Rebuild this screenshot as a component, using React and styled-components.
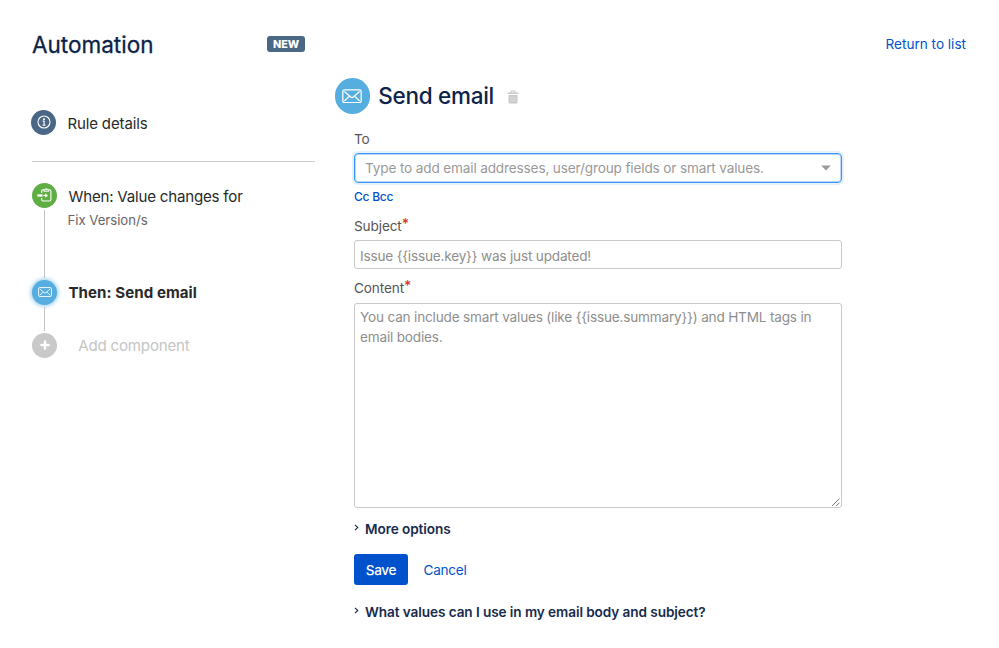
import React from "react";
import styled, { createGlobalStyle } from "styled-components";

const GlobalStyle = createGlobalStyle`
  * { box-sizing: border-box; }
  body {
    margin: 0;
    background: #fff;
    color: #172b4d;
    font-family: Inter, "Liberation Sans", sans-serif;
    font-size: 13.6px;
    -webkit-font-smoothing: antialiased;
  }
  a { color: #0052cc; text-decoration: none; }
`;

const Page = styled.div`
  display: flex;
  align-items: flex-start;
  width: 999px;
  height: 648px;
  padding-right: 33px;
  overflow: hidden;
`;

const Sidebar = styled.aside`
  display: flex;
  flex-direction: column;
  flex: none;
  width: 315px;
  padding-left: 32px;
`;

const SidebarHeader = styled.header`
  display: flex;
  align-items: center;
  justify-content: space-between;
  height: 89px;
  padding-right: 10px;
`;

const PageTitle = styled.h1`
  margin: 0;
  color: #0c2349;
  font-size: 22.5px;
  font-weight: 400;
  line-height: 28px;
  letter-spacing: 0.01px;
  -webkit-text-stroke: 0.3px #0c2349;
`;

const Badge = styled.span`
  width: 38px;
  height: 16px;
  margin-top: -1px;
  border-radius: 3px;
  background: #4a6785;
  color: #fff;
  font-size: 10.8px;
  font-weight: 800;
  line-height: 17px;
  letter-spacing: -0.1px;
  text-align: center;
`;

const RuleDetails = styled.div`
  display: flex;
  align-items: center;
  height: 73px;
  border-bottom: 1px solid #c9cdcc;
`;

const Disc = styled.span`
  display: flex;
  flex: none;
  align-items: center;
  justify-content: center;
  width: ${(p) => p.$size || 25}px;
  height: ${(p) => p.$size || 25}px;
  border-radius: 50%;
  background: ${(p) => p.$color};
  color: #fff;
  box-shadow: ${(p) => (p.$active ? "0 0 4px 1px rgba(82,172,224,.65)" : "none")};
  svg { display: block; }
`;

const RuleDisc = styled(Disc)`
  margin: -6px 0 0 -1px;
`;

const RuleLabel = styled.span`
  margin: -4px 0 0 11.4px;
  color: #292929;
  font-size: 15px;
  letter-spacing: -0.13px;
`;

const Steps = styled.div`
  display: flex;
  flex-direction: column;
  padding-top: 18.4px;
`;

const Step = styled.div`
  display: flex;
  height: ${(p) => p.$height}px;
`;

const Rail = styled.div`
  display: flex;
  flex: none;
  flex-direction: column;
  align-items: center;
  width: 25px;
  padding-top: 3px;
`;

const Connector = styled.span`
  flex: 1;
  width: 1px;
  margin: 2px 0 -1px;
  background: #c4c4c4;
`;

const StepBody = styled.div`
  padding-left: ${(p) => (p.$muted ? 21.3 : 11.5)}px;
  padding-top: 4.4px;
`;

const StepTitle = styled.div`
  color: ${(p) => (p.$muted ? "#c5c5c5" : "#292929")};
  font-size: 15.1px;
  font-weight: ${(p) => (p.$active ? 650 : 400)};
  line-height: 24px;
  letter-spacing: ${(p) => (p.$active ? 0.05 : -0.21)}px;
`;

const StepDetail = styled.div`
  margin-left: -1px;
  color: #666;
  font-size: 13.2px;
  line-height: 22px;
  letter-spacing: -0.03px;
`;

const Main = styled.main`
  display: flex;
  flex-direction: column;
  flex: none;
  width: 508px;
  margin-left: 19px;
  padding-top: 78px;
`;

const SectionHeader = styled.header`
  display: flex;
  align-items: center;
  height: 36px;
  padding-left: 0.5px;
`;

const SectionTitle = styled.h2`
  margin: -1px 0 0 8.5px;
  color: #0c2349;
  font-size: 22.5px;
  font-weight: 500;
  line-height: 28px;
  letter-spacing: -0.28px;
`;

const TrashButton = styled.button`
  display: flex;
  margin: 2px 0 0 12.8px;
  padding: 0;
  border: 0;
  background: none;
  color: #c9c9c9;
`;

const Form = styled.form`
  display: flex;
  flex-direction: column;
  padding: 11px 0 0 20px;
`;

const Label = styled.label`
  height: ${(p) => p.$height}px;
  padding-top: ${(p) => p.$drop || 0}px;
  color: #555;
  font-size: 13.6px;
  line-height: 28px;
  letter-spacing: -0.12px;
`;

const Required = styled.span`
  color: #d9352b;
  font-size: 14px;
  font-weight: 500;
  line-height: 0;
  vertical-align: 2px;
`;

const Combo = styled.div`
  display: flex;
  align-items: center;
  justify-content: space-between;
  height: 30px;
  padding: 0 10px;
  border: 1px solid #3b94f4;
  border-radius: 4px;
  box-shadow: inset 0 0 0 1px rgba(59, 148, 244, 0.35), 0 0 0 2px #e5f2fe;
  color: #999;
  letter-spacing: -0.15px;
`;

const CopyLinks = styled.div`
  height: 28px;
  font-size: 12px;
  font-weight: 500;
  line-height: 28px;
  letter-spacing: -0.26px;
`;

const TextField = styled.div`
  height: 29px;
  padding-left: 5px;
  border: 1px solid #c9c9c9;
  border-radius: 3px;
  color: #8e8e8e;
  line-height: 30px;
  letter-spacing: -0.19px;
`;

const TextArea = styled.div`
  display: flex;
  justify-content: space-between;
  align-items: flex-end;
  height: 205px;
  padding: 3px 0 0 5px;
  border: 1px solid #c9c9c9;
  border-radius: 3px;
  color: #8e8e8e;
`;

const TextAreaHint = styled.div`
  align-self: flex-start;
  width: 464px;
  line-height: 20px;
  letter-spacing: -0.19px;
`;

const Disclosure = styled.div`
  display: flex;
  align-items: center;
  height: 20px;
  margin-top: ${(p) => p.$gap}px;
  color: #172b4d;
  font-weight: 600;
  letter-spacing: -0.085px;
  svg { flex: none; margin: -3px 6px 0 0; }
`;

const Actions = styled.div`
  display: flex;
  align-items: center;
  gap: 15.5px;
  height: 32px;
  margin-top: 15px;
  line-height: 18px;
  letter-spacing: -0.27px;
`;

const SaveButton = styled.button`
  width: 54px;
  height: 31.5px;
  padding: 1px 0 0;
  border: 0;
  border-radius: 3px;
  background: #0052cc;
  color: #fff;
  font: 500 13.6px Inter, sans-serif;
  letter-spacing: -0.32px;
`;

const ReturnLink = styled.a`
  margin: 34px 0 0 auto;
  line-height: 20px;
  letter-spacing: -0.01px;
`;

const MailIcon = ({ size = 14 }) => (
  <svg width={size} height={size * 0.72} viewBox="0 0 20 14.4" fill="none" stroke="currentColor" strokeWidth="1.25" strokeLinejoin="round">
    <rect x=".8" y=".8" width="18.4" height="12.8" rx="1.8" />
    <path d="M2.4 2.5 8.7 8c.8.7 1.8.7 2.6 0l6.3-5.5M2.4 12l4.8-4.6M17.6 12l-4.8-4.6" />
  </svg>
);

const InfoIcon = () => (
  <svg width="14" height="14" viewBox="0 0 14 14" fill="none" stroke="currentColor">
    <circle cx="7" cy="7" r="6" strokeWidth="1.1" />
    <rect x="6.1" y="3.3" width="1.8" height="1.7" fill="currentColor" stroke="none" />
    <path d="M5.7 6.1h1.4v4.1M5.5 10.2h3" strokeWidth="1.1" />
  </svg>
);

const TriggerIcon = () => (
  <svg width="15" height="15" viewBox="0 0 15 15" fill="none" stroke="currentColor" strokeWidth="1.1">
    <path d="M4.7 5V3.2c0-.9.5-1.4 1.4-1.4h6.4c.9 0 1.4.5 1.4 1.4v8.4c0 .9-.5 1.4-1.4 1.4H6.1c-.9 0-1.4-.5-1.4-1.4V10" />
    <path d="M6.8 1.8v1.5h5V1.8M8 1.5c0-1.2 2.6-1.2 2.6 0" strokeWidth=".9" />
    <path d="M.4 7.5h5.1" strokeWidth="2.4" />
    <path d="M6.3 7.5h3.5M8.3 5.8 10 7.5 8.3 9.2" strokeWidth="1.2" />
  </svg>
);

const PlusIcon = () => (
  <svg width="10" height="10" viewBox="0 0 10 10" fill="none" stroke="currentColor" strokeWidth="2.4" strokeLinecap="round">
    <path d="M5 1.4v7.2M1.4 5h7.2" />
  </svg>
);

const TrashIcon = () => (
  <svg width="12" height="14" viewBox="0 0 12 14" fill="none" stroke="currentColor">
    <path d="M.6 3.2h10.8" strokeWidth="1.5" />
    <path d="M4 2.8V1h4v1.8" strokeWidth="1.1" />
    <path d="M1.5 4.9h9v7.3c0 .8-.4 1.2-1.2 1.2H2.7c-.8 0-1.2-.4-1.2-1.2z" fill="currentColor" stroke="none" />
    <path d="M4 6.3v5.5M6 6.3v5.5M8 6.3v5.5" stroke="#e2e2e2" strokeWidth=".7" />
  </svg>
);

const CaretIcon = () => (
  <svg width="10" height="6" viewBox="0 0 10 6">
    <path d="M.2.5h9.6L5 5.6z" fill="#999" />
  </svg>
);

const ChevronIcon = () => (
  <svg width="5" height="7" viewBox="0 0 5 7" fill="none" stroke="currentColor" strokeWidth="1.1">
    <path d="m1 .8 2.8 2.7L1 6.2" />
  </svg>
);

const ResizeGrip = () => (
  <svg width="10" height="10" viewBox="0 0 10 10" stroke="#777" strokeWidth="1">
    <path d="M1 9 8.5 1.5M5.2 9l3.3-3.3" />
  </svg>
);

export default function App() {
  return (
    <>
      <GlobalStyle />
      <Page>
        <Sidebar>
          <SidebarHeader>
            <PageTitle>Automation</PageTitle>
            <Badge>NEW</Badge>
          </SidebarHeader>
          <RuleDetails>
            <RuleDisc $color="#4a6785"><InfoIcon /></RuleDisc>
            <RuleLabel>Rule details</RuleLabel>
          </RuleDetails>
          <Steps>
            <Step $height={96.5}>
              <Rail>
                <Disc $color="#5fae43"><TriggerIcon /></Disc>
                <Connector />
              </Rail>
              <StepBody>
                <StepTitle>When: Value changes for</StepTitle>
                <StepDetail>Fix Version/s</StepDetail>
              </StepBody>
            </Step>
            <Step $height={52.7}>
              <Rail>
                <Disc $color="#56ade0" $active><MailIcon /></Disc>
                <Connector />
              </Rail>
              <StepBody>
                <StepTitle $active>Then: Send email</StepTitle>
              </StepBody>
            </Step>
            <Step $height={30}>
              <Rail>
                <Disc $color="#c9c9c9"><PlusIcon /></Disc>
              </Rail>
              <StepBody $muted>
                <StepTitle $muted>Add component</StepTitle>
              </StepBody>
            </Step>
          </Steps>
        </Sidebar>
        <Main>
          <SectionHeader>
            <Disc $color="#56ade0" $size={35.3}><MailIcon size={20} /></Disc>
            <SectionTitle>Send email</SectionTitle>
            <TrashButton type="button" aria-label="Delete"><TrashIcon /></TrashButton>
          </SectionHeader>
          <Form>
            <Label $height={28}>To</Label>
            <Combo>
              Type to add email addresses, user/group fields or smart values.
              <CaretIcon />
            </Combo>
            <CopyLinks><a href="#cc">Cc</a> <a href="#bcc">Bcc</a></CopyLinks>
            <Label $height={29} $drop={1}>Subject<Required>*</Required></Label>
            <TextField>{"Issue {{issue.key}} was just updated!"}</TextField>
            <Label $height={33.5} $drop={5}>Content<Required>*</Required></Label>
            <TextArea>
              <TextAreaHint>
                {"You can include smart values (like {{issue.summary}}) and HTML tags in email bodies."}
              </TextAreaHint>
              <ResizeGrip />
            </TextArea>
            <Disclosure $gap={11}><ChevronIcon />More options</Disclosure>
            <Actions>
              <SaveButton type="button">Save</SaveButton>
              <a href="#cancel">Cancel</a>
            </Actions>
            <Disclosure $gap={16}><ChevronIcon />What values can I use in my email body and subject?</Disclosure>
          </Form>
        </Main>
        <ReturnLink href="#list">Return to list</ReturnLink>
      </Page>
    </>
  );
}
